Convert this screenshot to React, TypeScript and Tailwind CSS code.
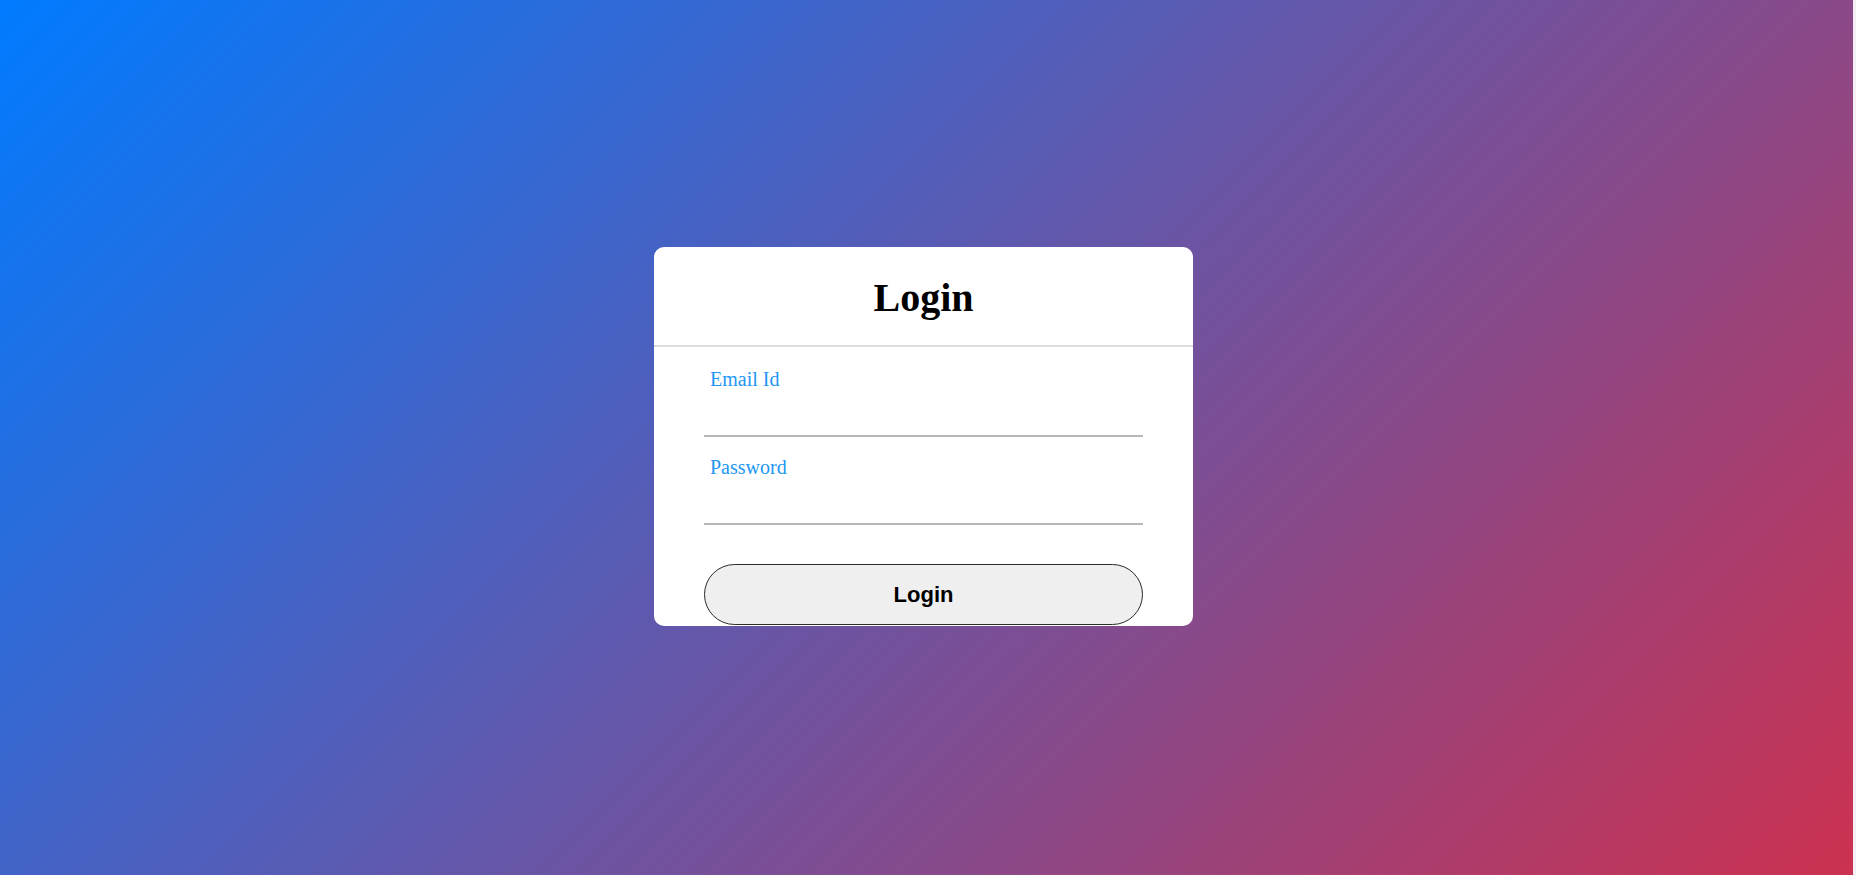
import React from 'react';

export default function App() {
  return (
    <div className="min-h-screen w-full bg-[#f4f0f6]">
      <div className="min-h-screen w-[calc(100%-3px)] bg-[linear-gradient(135deg,#007bff,#cc3150)] flex items-center justify-center pr-[6px] pb-[2px]">
        <div className="w-[539px] bg-white rounded-[10px] pb-[1px]">
          <div className="h-[100px] pt-[3px] border-b-2 border-[#dcdcdc] flex items-center justify-center">
            <h1 className="text-[40px] font-bold text-black font-['Liberation_Serif',serif] leading-[46px]">Login</h1>
          </div>
          <form className="px-[50px]" onSubmit={(e) => e.preventDefault()}>
            <div className="mt-[21px]">
              <label className="block pl-[6px] text-[20px] leading-[23px] text-[#2196f3] font-['Liberation_Serif',serif]">Email Id</label>
              <input type="email" className="block w-full h-[46px] border-b-2 border-[#b8b8b8] outline-none bg-transparent" />
            </div>
            <div className="mt-[19px]">
              <label className="block pl-[6px] text-[20px] leading-[23px] text-[#2196f3] font-['Liberation_Serif',serif]">Password</label>
              <input type="password" className="block w-full h-[46px] border-b-2 border-[#b8b8b8] outline-none bg-transparent" />
            </div>
            <button type="submit" className="mt-[39px] w-full h-[61px] rounded-full border border-[#2a2a2a] bg-[#efefef] text-[22px] font-bold text-black font-['Liberation_Sans',Arial,sans-serif]">
              Login
            </button>
          </form>
        </div>
      </div>
    </div>
  );
}
